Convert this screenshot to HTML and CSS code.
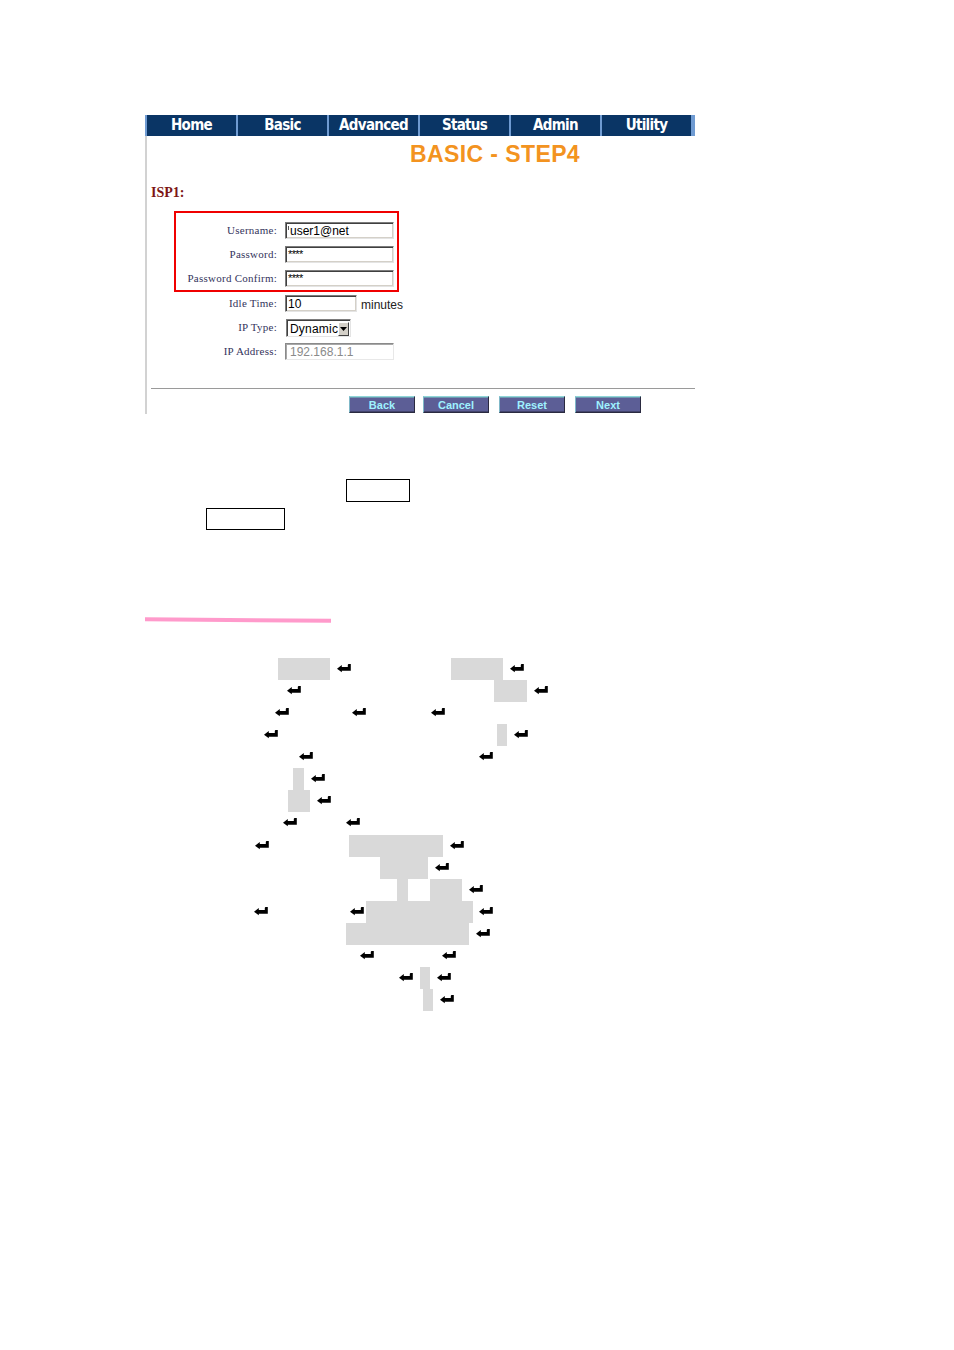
FILE: index.html
```html
<!DOCTYPE html>
<html>
<head>
<meta charset="utf-8">
<title>Basic - Step4</title>
<link rel="stylesheet" href="styles.css">
</head>
<body>
<div class="app">
  <nav class="nav">
    <span class="tab">Home</span>
    <span class="tab">Basic</span>
    <span class="tab">Advanced</span>
    <span class="tab">Status</span>
    <span class="tab">Admin</span>
    <span class="tab">Utility</span>
  </nav>
  <div class="panel">
    <h1 class="title">BASIC - STEP4</h1>
    <div class="isp">ISP1:</div>
    <div class="redbox">
      <div class="grid">
        <div class="lbl">Username:</div>
        <div class="inp w109"><span class="caret"></span>user1@net</div>
        <div class="lbl">Password:</div>
        <div class="inp w109 pw">****</div>
        <div class="lbl">Password Confirm:</div>
        <div class="inp w109 pw">****</div>
      </div>
    </div>
    <div class="grid outer">
      <div class="lbl">Idle Time:</div>
      <div class="fieldrow"><div class="inp w72">10</div><span class="unit">minutes</span></div>
      <div class="lbl">IP Type:</div>
      <div class="fieldrow"><div class="select"><span class="sel-text">Dynamic</span><span class="sel-btn"><svg width="7" height="4" viewBox="0 0 7 4"><path d="M0 0H7L3.5 4Z" fill="#000"/></svg></span></div></div>
      <div class="lbl">IP Address:</div>
      <div class="inp w109 disabled">192.168.1.1</div>
    </div>
    <div class="rule"></div>
    <div class="buttons">
      <span class="btn">Back</span>
      <span class="btn b2">Cancel</span>
      <span class="btn b3">Reset</span>
      <span class="btn b3">Next</span>
    </div>
  </div>
</div>

<div class="box box1"></div>
<div class="box box2"></div>
<div class="pink"></div>

<div class="lines">
  <div class="line"><span class="g" style="margin-left:278px;width:52px"></span><span class="ar" style="margin-left:7px"><svg viewBox="0 0 14 8"><path d="M0 5.2L4.8 1.6V3.6H10.8V1.4Q10.8 0.4 11.8 0.4H13.8V7.2H4.8V8.8Z"/></svg></span><span class="g" style="margin-left:100px;width:52px"></span><span class="ar" style="margin-left:7px"><svg viewBox="0 0 14 8"><path d="M0 5.2L4.8 1.6V3.6H10.8V1.4Q10.8 0.4 11.8 0.4H13.8V7.2H4.8V8.8Z"/></svg></span></div>
  <div class="line"><span class="ar" style="margin-left:287px"><svg viewBox="0 0 14 8"><path d="M0 5.2L4.8 1.6V3.6H10.8V1.4Q10.8 0.4 11.8 0.4H13.8V7.2H4.8V8.8Z"/></svg></span><span class="g" style="margin-left:193px;width:33px"></span><span class="ar" style="margin-left:7px"><svg viewBox="0 0 14 8"><path d="M0 5.2L4.8 1.6V3.6H10.8V1.4Q10.8 0.4 11.8 0.4H13.8V7.2H4.8V8.8Z"/></svg></span></div>
  <div class="line"><span class="ar" style="margin-left:275px"><svg viewBox="0 0 14 8"><path d="M0 5.2L4.8 1.6V3.6H10.8V1.4Q10.8 0.4 11.8 0.4H13.8V7.2H4.8V8.8Z"/></svg></span><span class="ar" style="margin-left:63px"><svg viewBox="0 0 14 8"><path d="M0 5.2L4.8 1.6V3.6H10.8V1.4Q10.8 0.4 11.8 0.4H13.8V7.2H4.8V8.8Z"/></svg></span><span class="ar" style="margin-left:65px"><svg viewBox="0 0 14 8"><path d="M0 5.2L4.8 1.6V3.6H10.8V1.4Q10.8 0.4 11.8 0.4H13.8V7.2H4.8V8.8Z"/></svg></span></div>
  <div class="line"><span class="ar" style="margin-left:264px"><svg viewBox="0 0 14 8"><path d="M0 5.2L4.8 1.6V3.6H10.8V1.4Q10.8 0.4 11.8 0.4H13.8V7.2H4.8V8.8Z"/></svg></span><span class="g" style="margin-left:219px;width:10px"></span><span class="ar" style="margin-left:7px"><svg viewBox="0 0 14 8"><path d="M0 5.2L4.8 1.6V3.6H10.8V1.4Q10.8 0.4 11.8 0.4H13.8V7.2H4.8V8.8Z"/></svg></span></div>
  <div class="line"><span class="ar" style="margin-left:299px"><svg viewBox="0 0 14 8"><path d="M0 5.2L4.8 1.6V3.6H10.8V1.4Q10.8 0.4 11.8 0.4H13.8V7.2H4.8V8.8Z"/></svg></span><span class="ar" style="margin-left:166px"><svg viewBox="0 0 14 8"><path d="M0 5.2L4.8 1.6V3.6H10.8V1.4Q10.8 0.4 11.8 0.4H13.8V7.2H4.8V8.8Z"/></svg></span></div>
  <div class="line"><span class="g" style="margin-left:293px;width:11px"></span><span class="ar" style="margin-left:7px"><svg viewBox="0 0 14 8"><path d="M0 5.2L4.8 1.6V3.6H10.8V1.4Q10.8 0.4 11.8 0.4H13.8V7.2H4.8V8.8Z"/></svg></span></div>
  <div class="line"><span class="g" style="margin-left:288px;width:22px"></span><span class="ar" style="margin-left:7px"><svg viewBox="0 0 14 8"><path d="M0 5.2L4.8 1.6V3.6H10.8V1.4Q10.8 0.4 11.8 0.4H13.8V7.2H4.8V8.8Z"/></svg></span></div>
  <div class="line"><span class="ar" style="margin-left:283px"><svg viewBox="0 0 14 8"><path d="M0 5.2L4.8 1.6V3.6H10.8V1.4Q10.8 0.4 11.8 0.4H13.8V7.2H4.8V8.8Z"/></svg></span><span class="ar" style="margin-left:49px"><svg viewBox="0 0 14 8"><path d="M0 5.2L4.8 1.6V3.6H10.8V1.4Q10.8 0.4 11.8 0.4H13.8V7.2H4.8V8.8Z"/></svg></span></div>
  <div class="line shift"><span class="ar" style="margin-left:255px"><svg viewBox="0 0 14 8"><path d="M0 5.2L4.8 1.6V3.6H10.8V1.4Q10.8 0.4 11.8 0.4H13.8V7.2H4.8V8.8Z"/></svg></span><span class="g" style="margin-left:80px;width:94px"></span><span class="ar" style="margin-left:7px"><svg viewBox="0 0 14 8"><path d="M0 5.2L4.8 1.6V3.6H10.8V1.4Q10.8 0.4 11.8 0.4H13.8V7.2H4.8V8.8Z"/></svg></span></div>
  <div class="line"><span class="g" style="margin-left:380px;width:48px"></span><span class="ar" style="margin-left:7px"><svg viewBox="0 0 14 8"><path d="M0 5.2L4.8 1.6V3.6H10.8V1.4Q10.8 0.4 11.8 0.4H13.8V7.2H4.8V8.8Z"/></svg></span></div>
  <div class="line"><span class="g" style="margin-left:397px;width:11px"></span><span class="g" style="margin-left:22px;width:32px"></span><span class="ar" style="margin-left:7px"><svg viewBox="0 0 14 8"><path d="M0 5.2L4.8 1.6V3.6H10.8V1.4Q10.8 0.4 11.8 0.4H13.8V7.2H4.8V8.8Z"/></svg></span></div>
  <div class="line"><span class="ar" style="margin-left:254px"><svg viewBox="0 0 14 8"><path d="M0 5.2L4.8 1.6V3.6H10.8V1.4Q10.8 0.4 11.8 0.4H13.8V7.2H4.8V8.8Z"/></svg></span><span class="ar" style="margin-left:82px"><svg viewBox="0 0 14 8"><path d="M0 5.2L4.8 1.6V3.6H10.8V1.4Q10.8 0.4 11.8 0.4H13.8V7.2H4.8V8.8Z"/></svg></span><span class="g" style="margin-left:2px;width:107px"></span><span class="ar" style="margin-left:6px"><svg viewBox="0 0 14 8"><path d="M0 5.2L4.8 1.6V3.6H10.8V1.4Q10.8 0.4 11.8 0.4H13.8V7.2H4.8V8.8Z"/></svg></span></div>
  <div class="line"><span class="g" style="margin-left:346px;width:123px"></span><span class="ar" style="margin-left:7px"><svg viewBox="0 0 14 8"><path d="M0 5.2L4.8 1.6V3.6H10.8V1.4Q10.8 0.4 11.8 0.4H13.8V7.2H4.8V8.8Z"/></svg></span></div>
  <div class="line"><span class="ar" style="margin-left:360px"><svg viewBox="0 0 14 8"><path d="M0 5.2L4.8 1.6V3.6H10.8V1.4Q10.8 0.4 11.8 0.4H13.8V7.2H4.8V8.8Z"/></svg></span><span class="ar" style="margin-left:68px"><svg viewBox="0 0 14 8"><path d="M0 5.2L4.8 1.6V3.6H10.8V1.4Q10.8 0.4 11.8 0.4H13.8V7.2H4.8V8.8Z"/></svg></span></div>
  <div class="line"><span class="ar" style="margin-left:399px"><svg viewBox="0 0 14 8"><path d="M0 5.2L4.8 1.6V3.6H10.8V1.4Q10.8 0.4 11.8 0.4H13.8V7.2H4.8V8.8Z"/></svg></span><span class="g" style="margin-left:7px;width:10px"></span><span class="ar" style="margin-left:7px"><svg viewBox="0 0 14 8"><path d="M0 5.2L4.8 1.6V3.6H10.8V1.4Q10.8 0.4 11.8 0.4H13.8V7.2H4.8V8.8Z"/></svg></span></div>
  <div class="line"><span class="g" style="margin-left:423px;width:10px"></span><span class="ar" style="margin-left:7px"><svg viewBox="0 0 14 8"><path d="M0 5.2L4.8 1.6V3.6H10.8V1.4Q10.8 0.4 11.8 0.4H13.8V7.2H4.8V8.8Z"/></svg></span></div>
</div>
</body>
</html>
```

FILE: styles.css
```css
* { box-sizing: border-box; }
html, body { margin: 0; padding: 0; background: #fff; }
body { width: 954px; height: 1350px; font-family: "Liberation Sans", Arial, sans-serif; }

.app { margin: 115px 0 0 145px; width: 550px; }

.nav {
  display: flex;
  gap: 2px;
  height: 21px;
  padding-left: 2px;
  background: #6f9bd2;
}
.tab {
  width: 89px;
  background: #0a3565;
  color: #fff;
  font-family: "DejaVu Sans Condensed", "DejaVu Sans", sans-serif;
  font-stretch: condensed;
  font-weight: bold;
  font-size: 15px;
  letter-spacing: -0.7px;
  line-height: 21px;
  text-align: center;
}

.panel {
  border-left: 2px solid #d2d2d2;
  padding: 4px 0 1px 4px;
}

.title {
  margin: 0;
  padding-left: 259px;
  font-family: "Liberation Sans", Arial, sans-serif;
  font-weight: bold;
  font-size: 23px;
  line-height: 28px;
  color: #f39320;
  letter-spacing: 0.4px;
}

.isp {
  margin-top: 17px;
  font-family: "Liberation Serif", "Times New Roman", serif;
  font-weight: bold;
  font-size: 14px;
  line-height: 16px;
  color: #7d1515;
}

.redbox {
  margin: 10px 0 0 23px;
  width: 225px;
  border: 2px solid #f00000;
  padding: 9px 3px 3px 0;
}

.grid {
  display: grid;
  grid-template-columns: 101px auto;
  column-gap: 8px;
  row-gap: 7px;
  grid-auto-rows: 17px;
  align-items: center;
}
.grid.outer { margin: 3px 0 0 25px; }

.lbl {
  text-align: right;
  font-family: "Liberation Serif", "Times New Roman", serif;
  font-size: 11px;
  letter-spacing: 0.25px;
  color: #34345c;
  line-height: 17px;
}

.inp {
  height: 17px;
  border: 1px solid;
  border-color: #7c7c7c #e4e4e4 #e4e4e4 #7c7c7c;
  box-shadow: inset 1px 1px 0 #404040, inset -1px -1px 0 #d4d0c8;
  background: #fff;
  font-family: "Liberation Sans", Arial, sans-serif;
  font-size: 12px;
  line-height: 15px;
  padding: 1px 0 0 2px;
  color: #000;
  white-space: nowrap;
  overflow: hidden;
}
.w109 { width: 109px; }
.w72 { width: 72px; }
.pw { font-size: 11px; line-height: 11px; padding-top: 2px; letter-spacing: -0.6px; }
.caret { display: inline-block; width: 1px; height: 4px; background: #555; vertical-align: top; margin: 2px 1px 0 0; }
.disabled {
  color: #8a8a8a;
  border-color: #8a8a8a #e8e8e8 #e8e8e8 #8a8a8a;
  box-shadow: inset 1px 1px 0 #a8a8a8;
  padding-left: 4px;
}

.fieldrow { display: flex; align-items: center; }
.unit {
  margin-left: 4px;
  font-size: 12px;
  color: #222;
  padding-top: 3px;
}

.select {
  margin-left: 1px;
  width: 65px;
  height: 18px;
  display: flex;
  align-items: center;
  justify-content: space-between;
  border: 1px solid;
  border-color: #7c7c7c #e4e4e4 #e4e4e4 #7c7c7c;
  box-shadow: inset 1px 1px 0 #404040;
  background: #fff;
  padding: 1px 1px 0 3px;
  margin-top: 1px;
}
.sel-text { font-size: 12px; color: #000; letter-spacing: 0.2px; }
.sel-btn {
  width: 14px;
  height: 14px;
  background: #d4d0c8;
  border: 1px solid;
  border-color: #fff #404040 #404040 #fff;
  display: flex;
  align-items: center;
  justify-content: center;
}
.sel-btn svg { display: block; }

.rule {
  margin-top: 28px;
  height: 1px;
  background: #9a9a9a;
}

.buttons {
  display: flex;
  margin: 7px 0 0 198px;
}
.btn {
  width: 66px;
  height: 17px;
  background: #5c5e96;
  border: 1px solid;
  border-color: #8fd6d8 #2a2a40 #2a2a40 #7fb8c8;
  box-shadow: inset 0 1px 0 #6e9ab0, inset 0 -1px 0 #43446c;
  color: #9ff2ff;
  font-family: "Liberation Sans", Arial, sans-serif;
  font-weight: bold;
  font-size: 11px;
  line-height: 16px;
  text-align: center;
}
.b2 { margin-left: 8px; }
.b3 { margin-left: 10px; }

.box { border: 1px solid #000; }
.box1 { margin: 65px 0 0 346px; width: 64px; height: 23px; }
.box2 { margin: 6px 0 0 206px; width: 79px; height: 22px; }

.pink {
  margin: 88px 0 0 145px;
  width: 186px;
  height: 4px;
  background: #ff9acb;
  transform: skewY(0.5deg);
}

.lines { margin-top: 36px; }
.line { display: flex; height: 22px; }
.line.shift { margin-top: 1px; }
.g { display: block; height: 22px; background: #d9d9d9; }
.ar { display: block; width: 14px; height: 9px; margin-top: 5px; }
.ar svg { display: block; width: 14px; height: 9px; fill: #000; overflow: visible; }
```
